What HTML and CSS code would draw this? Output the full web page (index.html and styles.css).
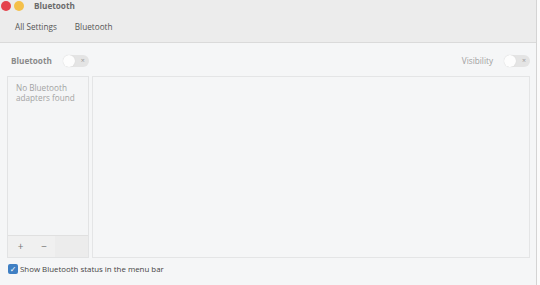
FILE: index.html
```html
<!DOCTYPE html>
<html>
<head>
	<meta charset="utf-8">
	<title>Bluetooth</title>
	<link rel="stylesheet" href="styles.css">
</head>
<body>
	<div class="window">
		<header class="head">
			<div class="titlebar">
				<span class="dot red"></span>
				<span class="dot yellow"></span>
				<span class="title">Bluetooth</span>
			</div>
			<nav class="crumbs">
				<span>All Settings</span>
				<span>Bluetooth</span>
			</nav>
		</header>
		<div class="topline">
			<div class="pair">
				<span class="label">Bluetooth</span>
				<span class="toggle"><i class="knob"></i><i class="x">×</i></span>
			</div>
			<div class="pair">
				<span class="vis">Visibility</span>
				<span class="toggle"><i class="knob"></i><i class="x">×</i></span>
			</div>
		</div>
		<div class="panes">
			<div class="list">
				<p class="empty">No Bluetooth adapters found</p>
				<div class="tools">
					<span class="tbtn">+</span>
					<span class="tbtn">−</span>
				</div>
			</div>
			<div class="detail"></div>
		</div>
		<label class="check">
			<span class="box">✓</span>
			Show Bluetooth status in the menu bar
		</label>
	</div>
</body>
</html>
```

FILE: styles.css
```css
html, body {
	margin: 0;
	padding: 0;
	width: 540px;
	height: 285px;
	overflow: hidden;
	background: #fbfbfb;
	font-family: "Open Sans", "DejaVu Sans", sans-serif;
	font-size: 8.2px;
	color: #4c4c4c;
}

.window {
	width: 536px;
	height: 285px;
	background: #f5f6f7;
	border-right: 1px solid #d4d4d4;
}

.head {
	background: #ececec;
	border-bottom: 1px solid #dadada;
	height: 42px;
}

.titlebar {
	height: 11px;
	display: flex;
	align-items: center;
	padding-left: 1px;
}

.dot {
	width: 10px;
	height: 10px;
	border-radius: 50%;
	margin-right: 3px;
}
.red { background: #e4424b; }
.yellow { background: #f4c04a; }

.title {
	margin-left: 7px;
	font-weight: bold;
	color: #6a6a6a;
}

.crumbs {
	display: flex;
	gap: 18px;
	padding: 10px 0 0 15px;
	color: #555;
}

.topline {
	display: flex;
	justify-content: space-between;
	align-items: center;
	height: 33px;
	padding: 2px 6px 0 11px;
	box-sizing: border-box;
}

.pair {
	display: flex;
	align-items: center;
	gap: 11px;
}

.label {
	font-weight: bold;
	color: #8a8a8a;
}
.vis { color: #a0a0a0; }

.toggle {
	position: relative;
	width: 26px;
	height: 12px;
	border-radius: 6px;
	background: #e4e4e4;
	display: flex;
	align-items: center;
	justify-content: flex-end;
}
.knob {
	position: absolute;
	left: 0;
	top: 0;
	width: 12px;
	height: 12px;
	border-radius: 50%;
	background: #fdfdfd;
	box-shadow: 0 0 1px #ccc;
}
.x {
	font-style: normal;
	font-size: 7px;
	color: #999;
	margin-right: 4px;
}

.panes {
	display: flex;
	gap: 3px;
	padding-left: 7px;
	height: 182px;
}

.list {
	width: 80px;
	border: 1px solid #e2e3e4;
	background: #f4f5f6;
	display: flex;
	flex-flow: column;
	justify-content: space-between;
}

.empty {
	margin: 6px 0 0 8px;
	color: #a3a3a3;
	line-height: 10px;
}

.tools {
	display: flex;
	height: 21px;
	background: #ececec;
	border-top: 1px solid #e0e0e0;
}
.tbtn {
	width: 25px;
	text-align: center;
	line-height: 20px;
	font-size: 10px;
	color: #777;
	background: #f0f0f0;
}
.tbtn + .tbtn { width: 22px; }

.detail {
	width: 436px;
	border: 1px solid #e4e5e6;
	background: #f5f6f7;
}

.check {
	display: flex;
	align-items: center;
	gap: 2px;
	padding: 6px 0 0 8px;
	font-size: 7.9px;
	color: #454545;
}
.box {
	width: 10px;
	height: 10px;
	border-radius: 2px;
	background: #3f7fc3;
	color: #fff;
	font-size: 8px;
	line-height: 10px;
	text-align: center;
}
```
